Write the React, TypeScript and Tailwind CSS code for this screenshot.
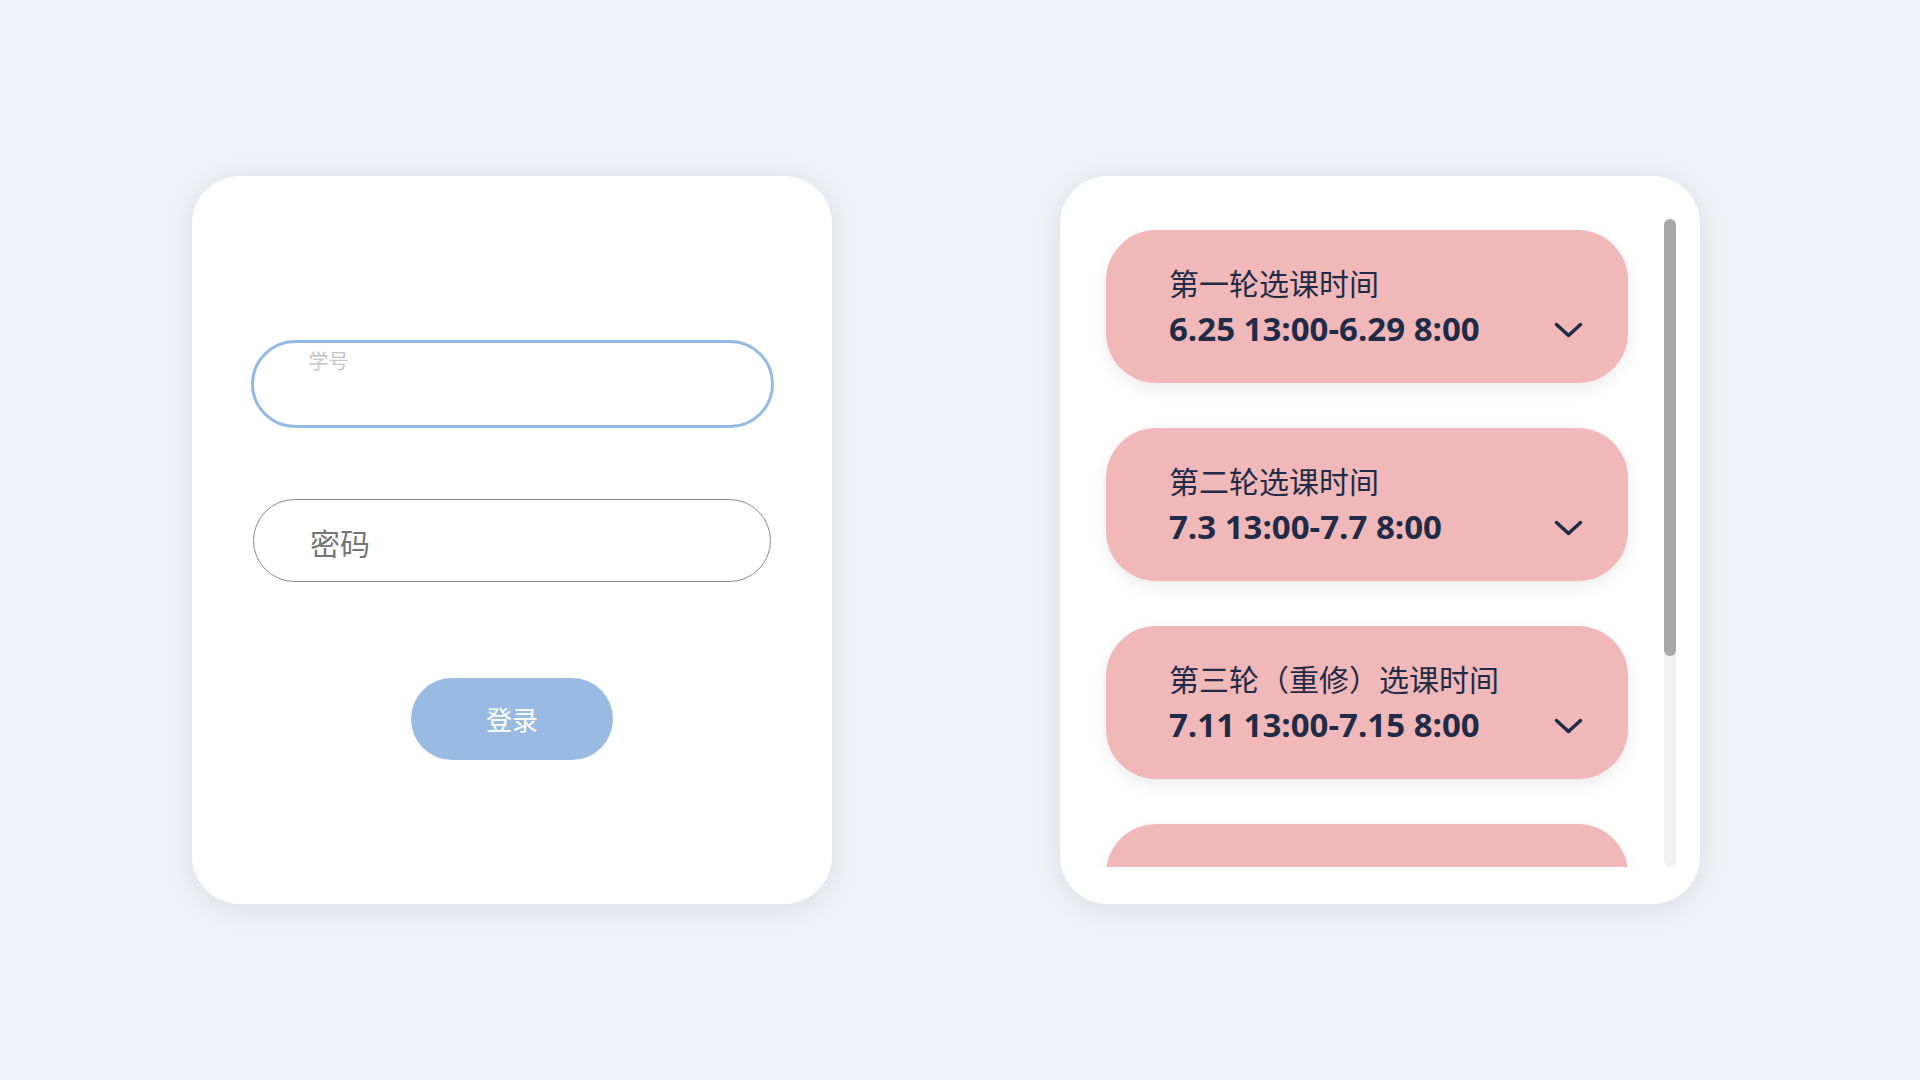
import React from "react";

const rounds = [
  { title: "第一轮选课时间", time: "6.25 13:00-6.29 8:00" },
  { title: "第二轮选课时间", time: "7.3 13:00-7.7 8:00" },
  { title: "第三轮（重修）选课时间", time: "7.11 13:00-7.15 8:00" },
  { title: "", time: "" },
  { title: "", time: "" },
];

function Chevron() {
  return (
    <svg width="29" height="16" viewBox="0 0 29 16" fill="none">
      <path
        d="M2.5 2.5 L14.5 13.5 L26.5 2.5"
        stroke="#1f2b47"
        strokeWidth="3.5"
        strokeLinecap="round"
        strokeLinejoin="round"
      />
    </svg>
  );
}

export default function App() {
  return (
    <div className="w-full h-screen bg-[#eef1f6] flex items-center pl-[192px] gap-[228px] font-['Noto_Sans_CJK_SC',sans-serif]">
      {/* Login card */}
      <div className="w-[640px] h-[728px] bg-white rounded-[48px] shadow-[0_4px_30px_rgba(30,40,80,0.08)] flex flex-col items-center pt-[164px]">
        <div className="relative w-[523px] h-[88px] rounded-full border-[3px] border-[#94b9e4] bg-white">
          <span className="absolute left-[55px] top-[8px] text-[20px] leading-[20px] text-[#c4c4c4]">
            学号
          </span>
          <input
            className="w-full h-full rounded-full bg-transparent outline-none pl-[55px] pt-[20px] text-[24px] text-[#333]"
            type="text"
          />
        </div>

        <input
          className="mt-[71px] w-[518px] h-[83px] rounded-full border border-[#8a8a8a] outline-none pl-[56px] pt-[2px] text-[30px] text-[#333] placeholder:text-[#757575] font-['Noto_Sans_CJK_SC',sans-serif]"
          type="password"
          placeholder="密码"
        />

        <button className="mt-[96px] w-[202px] h-[82px] rounded-full bg-[#99bae3] text-white text-[26px] leading-none flex items-center justify-center">
          登录
        </button>
      </div>

      {/* Schedule card */}
      <div className="w-[640px] h-[728px] bg-white rounded-[48px] shadow-[0_4px_30px_rgba(30,40,80,0.08)] flex pt-[43px] pb-[37px] pl-[26px] pr-[24px]">
        <div className="w-[562px] h-[648px] overflow-hidden px-[20px] pt-[11px] flex flex-col gap-[45px]">
          {rounds.map((r, i) => (
            <div
              key={i}
              className="shrink-0 h-[153px] rounded-[50px] bg-[#f0b8b8] shadow-[0_6px_16px_rgba(0,0,0,0.08)] pl-[63px] pr-[45px] pt-[32px] text-[#1f2b47]"
            >
              {r.title && (
                <>
                  <div className="text-[30px] leading-[40px]">{r.title}</div>
                  <div className="mt-[7px] flex items-center justify-between">
                    <span className="text-[33px] leading-[40px] font-bold font-['Open_Sans','Noto_Sans_CJK_SC',sans-serif]">
                      {r.time}
                    </span>
                    <span className="mt-[2px]">
                      <Chevron />
                    </span>
                  </div>
                </>
              )}
            </div>
          ))}
        </div>

        {/* scrollbar */}
        <div className="ml-[16px] w-[12px] h-[648px] rounded-full bg-[#f1f1f1]">
          <div className="w-full h-[437px] rounded-full bg-[#a8a8a8]" />
        </div>
      </div>
    </div>
  );
}
